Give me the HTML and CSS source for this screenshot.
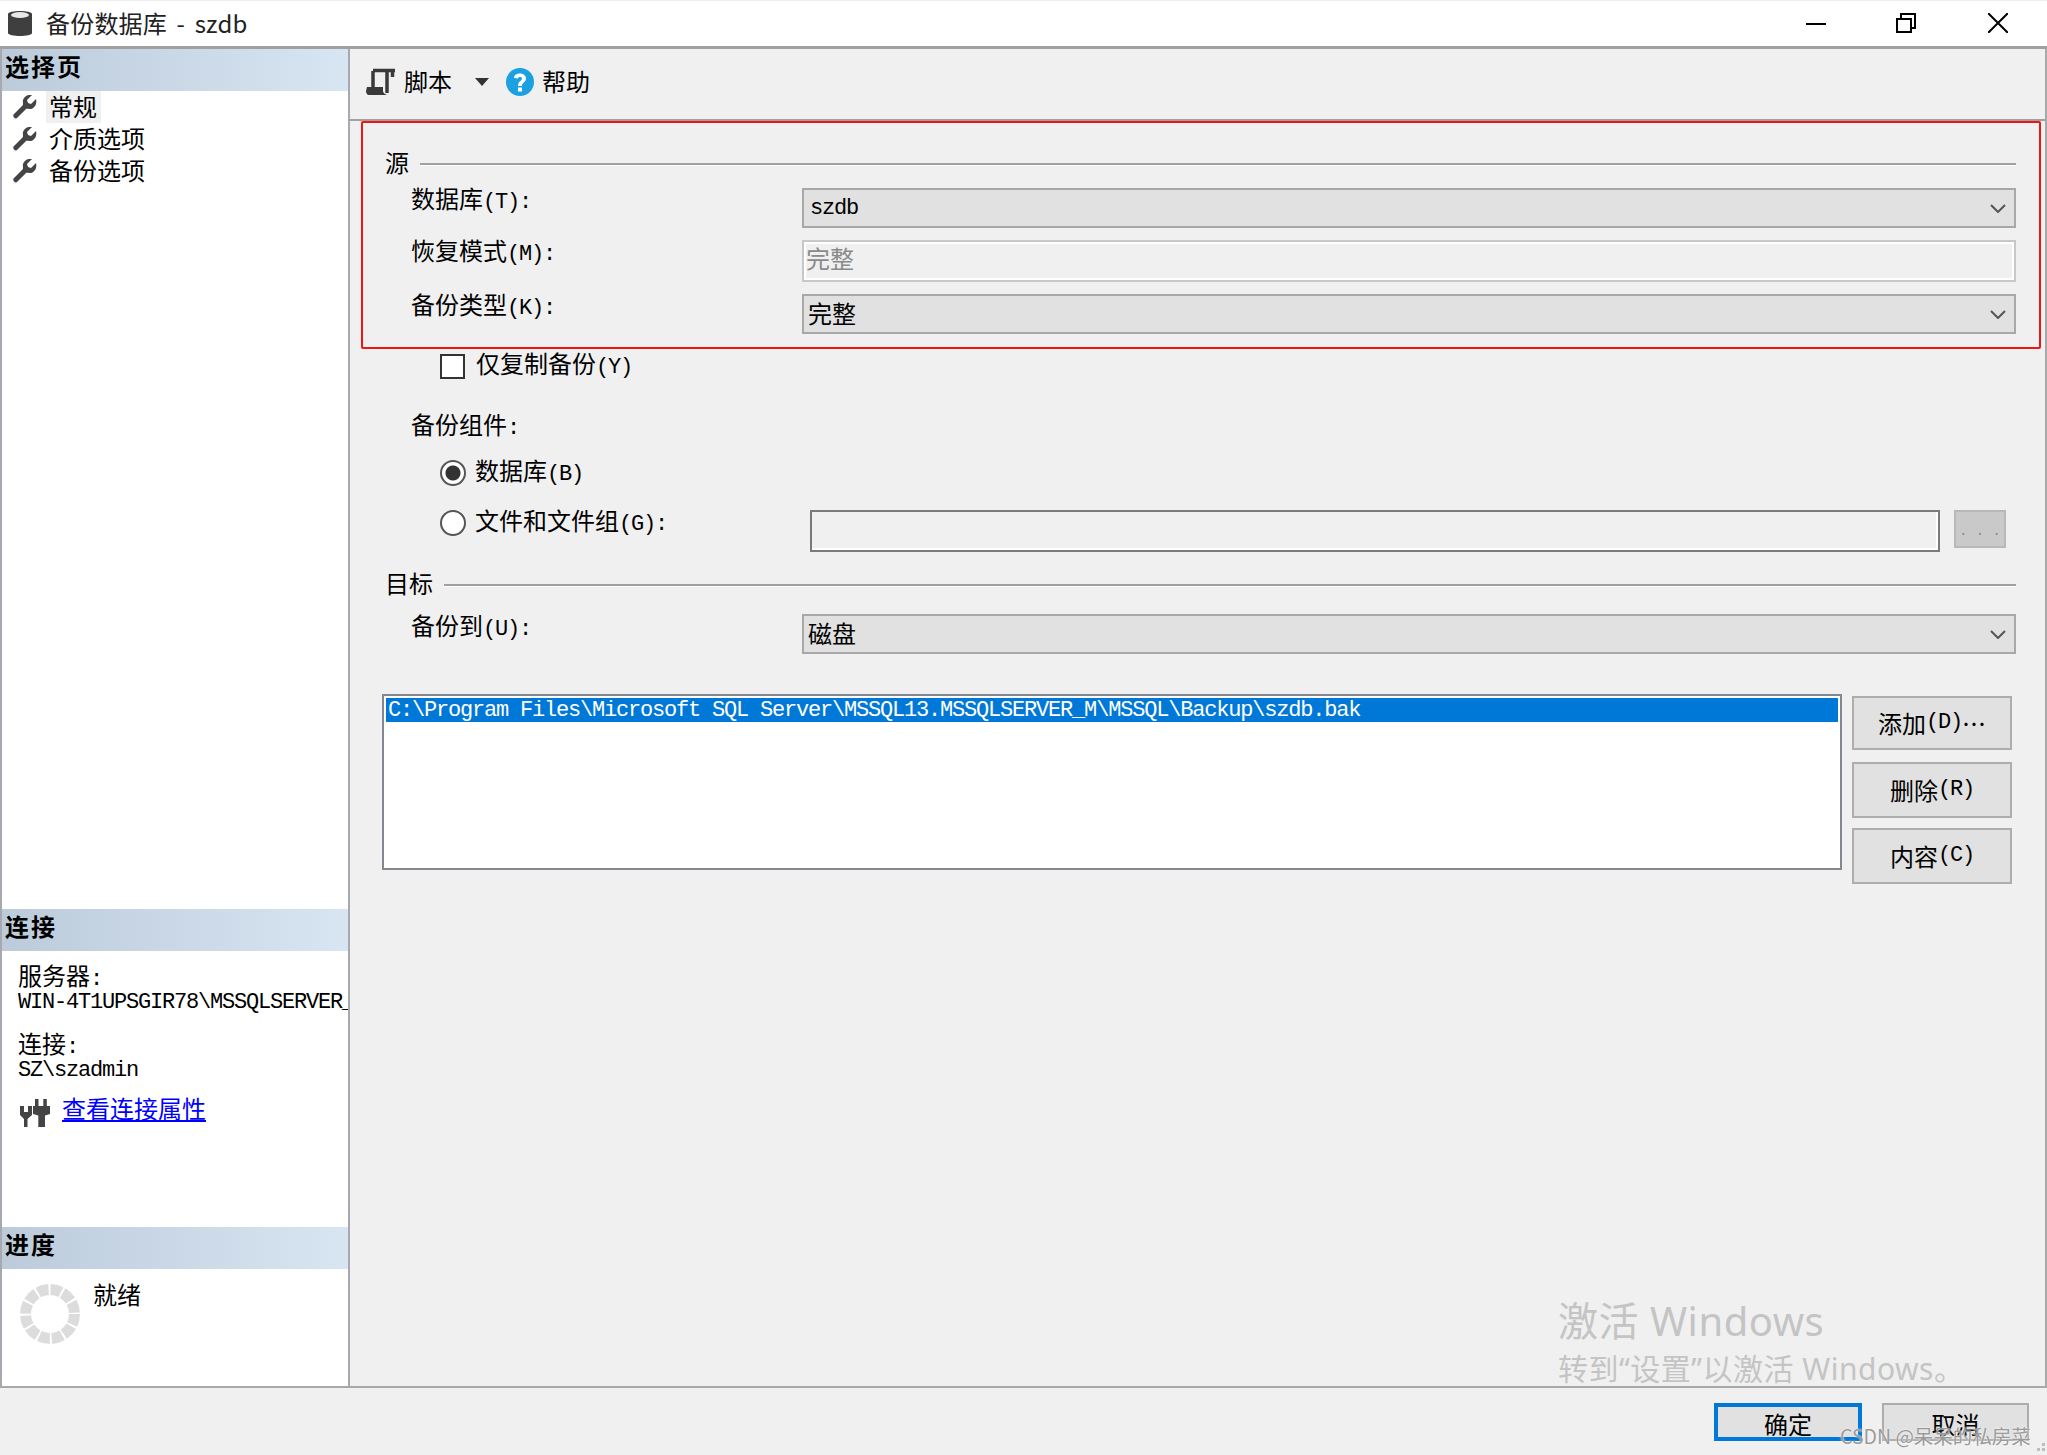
FILE: index.html
```html
<!DOCTYPE html>
<html lang="zh-CN">
<head>
	<meta charset="UTF-8">
	<title>备份数据库 - szdb</title>
	<link rel="stylesheet" href="styles.css">
</head>
<body>

<div class="window">

	<div class="titlebar">
		<svg class="dbIcon" width="24" height="28" viewBox="0 0 24 28">
			<path d="M0 5C0 1 24 1 24 5V24C24 28 0 28 0 24Z" fill="#3f3f3f"/>
			<ellipse cx="12" cy="6" rx="9" ry="3" fill="#e8e8e8"/>
		</svg>
		<span class="titleText">备份数据库 - szdb</span>
		<svg class="winBtn btnMin" width="20" height="20" viewBox="0 0 20 20"><path d="M0 11H20" stroke="#000" stroke-width="2"/></svg>
		<svg class="winBtn btnMax" width="20" height="20" viewBox="0 0 20 20"><path d="M1 6H15V19H1ZM5 6V1H19V15H15" fill="none" stroke="#000" stroke-width="2"/></svg>
		<svg class="winBtn btnClose" width="20" height="20" viewBox="0 0 20 20"><path d="M0 0L20 20M20 0L0 20" stroke="#000" stroke-width="2"/></svg>
	</div>

	<div class="main">

		<div class="side">
			<div class="sideHead">选择页</div>
			<ul class="nav">
				<li class="navItem">
					<svg class="wrench" width="24" height="24" viewBox="0 0 24 24"><use href="#wrench"/></svg>
					<span class="navText navSel">常规</span>
				</li>
				<li class="navItem">
					<svg class="wrench" width="24" height="24" viewBox="0 0 24 24"><use href="#wrench"/></svg>
					<span class="navText">介质选项</span>
				</li>
				<li class="navItem">
					<svg class="wrench" width="24" height="24" viewBox="0 0 24 24"><use href="#wrench"/></svg>
					<span class="navText">备份选项</span>
				</li>
			</ul>

			<div class="sideHead">连接</div>
			<div class="connBody">
				<div>服务器<span class="m">:</span></div>
				<div class="m connLine">WIN-4T1UPSGIR78\MSSQLSERVER_M</div>
				<div class="connGap">连接<span class="m">:</span></div>
				<div class="m connLine">SZ\szadmin</div>
				<div class="connLink">
					<svg width="30" height="29" viewBox="0 0 30 29">
						<path d="M15 0H18.500V7H15ZM23.300 0H26.800V7H23.300ZM13 7H30V15L25 16.500V28H18.300V16.500L13 15Z" fill="#444"/>
						<path d="M0 7H4V13H8V7H12V16L7.500 20V28H4V20L0 16Z" fill="#444"/>
					</svg>
					<a class="link" href="#">查看连接属性</a>
				</div>
			</div>

			<div class="sideHead">进度</div>
			<div class="progBody">
				<svg width="60" height="60" viewBox="0 0 60 60">
					<circle cx="30" cy="30" r="24.5" fill="none" stroke="#dcdcdc" stroke-width="11" stroke-dasharray="10.8 2"/>
				</svg>
				<span>就绪</span>
			</div>
		</div>

		<div class="content">
			<div class="toolbar">
				<svg class="scriptIcon" width="30" height="28" viewBox="0 0 30 28">
					<path d="M7 3V21M21 4V25M7 2.500H29M26.500 2V9" fill="none" stroke="#3a3a3a" stroke-width="3.500"/>
					<path d="M1 19H17V23C17 25 19 26 21 27H3C1 27 0 25 0 23Z" fill="#3a3a3a"/>
				</svg>
				<span class="toolText">脚本</span>
				<svg class="caret" width="14" height="8" viewBox="0 0 14 8"><path d="M0 0H14L7 8Z" fill="#333"/></svg>
				<svg class="helpIcon" width="28" height="28" viewBox="0 0 28 28">
					<circle cx="14" cy="14" r="14" fill="#1ba1e2"/>
					<path d="M8 10C8 4 20 4 20 10.500C20 14 16 14.500 16 18H12C12 13 16 13 16 10.500C16 8.500 12 8.500 12 10.500Z" fill="#fff"/>
					<rect x="12" y="19.500" width="4" height="4" fill="#fff"/>
				</svg>
				<span class="toolText">帮助</span>
			</div>

			<div class="form">
				<div class="groupHead groupFirst"><span class="groupText">源</span><i class="rule"></i></div>

				<div class="row rowFirst">
					<div class="label">数据库<span class="m">(T):</span></div>
					<div class="combo"><span class="m comboM">szdb</span><svg class="chev" width="16" height="9" viewBox="0 0 16 9"><path d="M1 1L8 8L15 1" fill="none" stroke="#555" stroke-width="2"/></svg></div>
				</div>
				<div class="row">
					<div class="label">恢复模式<span class="m">(M):</span></div>
					<div class="field">完整</div>
				</div>
				<div class="row">
					<div class="label">备份类型<span class="m">(K):</span></div>
					<div class="combo"><span>完整</span><svg class="chev" width="16" height="9" viewBox="0 0 16 9"><path d="M1 1L8 8L15 1" fill="none" stroke="#555" stroke-width="2"/></svg></div>
				</div>

				<div class="checkRow"><i class="check"></i><span class="checkText">仅复制备份<span class="m">(Y)</span></span></div>

				<div class="label compLabel">备份组件<span class="m">:</span></div>

				<div class="radioRow radioFirst"><i class="radio radioOn"></i><span class="radioText">数据库<span class="m">(B)</span></span></div>
				<div class="fileRow">
					<div class="radioRow fileRadio"><i class="radio"></i><span class="radioText">文件和文件组<span class="m">(G):</span></span></div>
					<div class="fileInput"></div>
					<div class="browseBtn">. . .</div>
				</div>

				<div class="groupHead groupTarget"><span class="groupText">目标</span><i class="rule"></i></div>

				<div class="row rowTarget">
					<div class="label labelTarget">备份到<span class="m">(U):</span></div>
					<div class="combo"><span>磁盘</span><svg class="chev" width="16" height="9" viewBox="0 0 16 9"><path d="M1 1L8 8L15 1" fill="none" stroke="#555" stroke-width="2"/></svg></div>
				</div>

				<div class="destRow">
					<div class="destList">
						<div class="destItem m">C:\Program Files\Microsoft SQL Server\MSSQL13.MSSQLSERVER_M\MSSQL\Backup\szdb.bak</div>
					</div>
					<div class="destBtns">
						<div class="btn btnAdd">添加<span class="m">(D)</span>⋯</div>
						<div class="btn btnDel">删除<span class="m">(R)</span></div>
						<div class="btn btnProp">内容<span class="m">(C)</span></div>
					</div>
				</div>
			</div>
		</div>
	</div>

	<div class="footer">
		<div class="okBtn">确定</div>
		<div class="cancelBtn">取消</div>
	</div>

	<!-- red annotation box, drawn over the dialog -->
	<div class="redBox"></div>

	<div class="activate">
		<div class="actBig">激活 Windows</div>
		<div class="actSmall">转到“设置”以激活 Windows。</div>
	</div>
	<div class="csdn">CSDN @呆呆的私房菜</div>
	<svg class="grip" width="14" height="14" viewBox="0 0 14 14">
		<path d="M9 2H12V5H9ZM4 7H7V10H4ZM9 7H12V10H9Z" fill="#bdbdbd"/>
	</svg>
</div>

<svg width="0" height="0" class="defs">
	<defs>
		<path id="wrench" fill="#444" d="M23 4L18 9L15 8L14 5L19 0C14 -1 9 3 10 8C10 9 10 10 9.500 10.500L1 19C0 20 0 21 1 22.500C2.500 24 3.500 23.500 4.500 22.500L13 14C14 13.500 15 14 17 14C21 14 24.500 9 23 4Z"/>
	</defs>
</svg>

</body>
</html>
```

FILE: styles.css
```css
html, body {
	margin: 0;
	padding: 0;
	background: #f0f0f0;
}

body {
	font-family: "Noto Sans CJK SC", sans-serif;
	font-size: 24px;
	line-height: 24px;
	color: #000;
	overflow: hidden;
}

/* half width latin text, 12px a character */
.m {
	font-family: "Liberation Mono", monospace;
	font-size: 22px;
	letter-spacing: -1.2px;
	line-height: 1;
}

.defs {
	position: absolute;
}

.window {
	position: relative;
	display: flex;
	flex-direction: column;
	width: 2047px;
	height: 1455px;
	overflow: hidden;
}

/* title bar */
.titlebar {
	display: flex;
	align-items: center;
	flex: none;
	height: 46px;
	box-sizing: border-box;
	border-top: 1px solid #eee;
	border-bottom: 0;
	background: #fff;
	padding-bottom: 1px;
}

.dbIcon {
	margin-left: 8px;
}

.titleText {
	margin-left: 14px;
	color: #222;
	word-spacing: 4px;
	letter-spacing: 0.2px;
}

.winBtn {
	flex: none;
}

.btnMin {
	margin-left: auto;
}

.btnMax {
	margin-left: 70px;
}

.btnClose {
	margin-left: 72px;
	margin-right: 39px;
}

/* body of the dialog */
.main {
	display: flex;
	flex: none;
	height: 1342px;
	border-top: 3px solid #a0a0a0;
	border-bottom: 2px solid #a8a8a8;
	box-sizing: border-box;
}

.side {
	display: flex;
	flex-direction: column;
	flex: none;
	width: 350px;
	box-sizing: border-box;
	border-left: 2px solid #a8a8b0;
	border-right: 2px solid #a8a8b0;
	background: #fff;
	overflow: hidden;
}

.sideHead {
	flex: none;
	height: 42px;
	padding: 2px 0 0 3px;
	box-sizing: border-box;
	line-height: 29px;
	font-weight: bold;
	letter-spacing: 2px;
	background: linear-gradient(to right, #bccbda, #d8e5f3);
}

.nav {
	flex: 1;
	margin: 0;
	padding: 0;
	list-style: none;
}

.navItem {
	display: flex;
	align-items: center;
	height: 32px;
	padding-left: 11px;
}

.wrench {
	flex: none;
}

.navText {
	margin-left: 9px;
	padding: 3px 4px 5px 3px;
}

.navSel {
	background: #f0f0f0;
}

.connBody {
	flex: none;
	height: 276px;
	padding: 12px 0 0 16px;
	box-sizing: border-box;
	white-space: nowrap;
}

.connLine {
	line-height: 24px;
}

.connGap {
	margin-top: 16px;
}

.connLink {
	display: flex;
	align-items: flex-start;
	margin: 16px 0 0 2px;
}

.link {
	margin-left: 12px;
	color: #00f;
	text-decoration: underline;
	margin-top: -3px;
}

.progBody {
	display: flex;
	align-items: flex-start;
	flex: none;
	height: 117px;
	padding: 15px 0 0 18px;
	box-sizing: border-box;
}

.progBody span {
	margin-left: 13px;
	margin-top: -2px;
}

/* right hand part */
.content {
	flex: 1;
	box-sizing: border-box;
	border-right: 2px solid #a8a8a8;
}

.toolbar {
	display: flex;
	align-items: center;
	height: 72px;
	box-sizing: border-box;
	padding: 0 0 4px 16px;
	border-bottom: 2px solid #a0a0a0;
}

.toolText {
	margin-left: 8px;
	margin-top: -2px;
}

.caret {
	margin-left: 23px;
}

.helpIcon {
	margin-left: 17px;
}

.form {
	padding: 0 29px 0 36px;
}

.groupHead {
	display: flex;
	align-items: center;
	height: 26px;
}

.groupText {
	margin: -4px 0 0 -1px;
}

.groupFirst {
	margin-top: 30px;
}

.groupTarget {
	margin-top: 20px;
}

.rule {
	flex: 1;
	margin-left: 11px;
	height: 2px;
	background: #a0a0a0;
	border-bottom: 1px solid #fff;
}

.row {
	display: flex;
	align-items: flex-start;
	margin-top: 12px;
}

.rowFirst {
	margin-top: 11px;
}

.rowTarget {
	margin-top: 16px;
}

.label {
	padding-left: 25px;
	height: 24px;
}

.row .label {
	flex: none;
	width: 391px;
	margin-top: -2px;
}

.row .labelTarget {
	margin-top: -1px;
}

.combo {
	display: flex;
	align-items: center;
	justify-content: space-between;
	flex: 1;
	height: 40px;
	box-sizing: border-box;
	padding: 0 8px 0 4px;
	border: 2px solid #a8a8a8;
	background: #e1e1e1;
}

.combo span {
	margin-top: -2px;
}

.combo .comboM {
	margin: 1px 0 0 2px;
}

.field {
	flex: 1;
	height: 42px;
	box-sizing: border-box;
	padding-left: 2px;
	line-height: 32px;
	color: #8a8a8a;
	border: 2px solid #c8c8c8;
	outline: 2px solid #fff;
	outline-offset: -4px;
	background: #f0f0f0;
}

.checkRow {
	display: flex;
	align-items: center;
	margin-top: 20px;
	padding-left: 54px;
	height: 25px;
}

.checkText {
	margin-left: 11px;
	margin-top: -3px;
}

.check {
	flex: none;
	width: 25px;
	height: 25px;
	box-sizing: border-box;
	border: 2px solid #333;
	background: #fff;
}

.compLabel {
	margin-top: 35px;
	position: relative;
	top: -2px;
}

.radioRow {
	display: flex;
	align-items: center;
	padding-left: 54px;
	height: 26px;
}

.radioText {
	margin-left: 9px;
	margin-top: -3px;
}

.radioFirst {
	margin-top: 22px;
}

.radio {
	flex: none;
	width: 26px;
	height: 26px;
	box-sizing: border-box;
	border: 2px solid #555;
	border-radius: 50%;
	background: #fff;
}

.radioOn {
	background: radial-gradient(circle, #333 7px, #fff 8px);
}

.fileRow {
	display: flex;
	align-items: flex-start;
	margin-top: 24px;
}

.fileRadio {
	flex: none;
	width: 370px;
}

.fileInput {
	flex: none;
	width: 1130px;
	height: 42px;
	box-sizing: border-box;
	border: 2px solid #7a7a7a;
	box-shadow: inset -2px -2px 0 #fff;
}

.browseBtn {
	flex: none;
	width: 52px;
	height: 38px;
	margin-left: 14px;
	box-sizing: border-box;
	border: 2px solid #b8b8b8;
	background: #c9c9c9;
	color: #8c8c8c;
	font-family: "Liberation Mono", monospace;
	font-size: 14px;
	line-height: 38px;
	text-align: center;
}

.destRow {
	display: flex;
	align-items: flex-start;
	margin: 40px 0 0 -4px;
}

.destList {
	flex: none;
	width: 1460px;
	height: 176px;
	box-sizing: border-box;
	padding: 2px;
	border: 2px solid #828790;
	background: #fff;
}

.destItem {
	height: 24px;
	padding-left: 2px;
	line-height: 26px;
	color: #fff;
	background: #0078d7;
}

.destBtns {
	flex: none;
	width: 160px;
	margin: 2px 0 0 10px;
}

.btn {
	display: flex;
	align-items: center;
	justify-content: center;
	box-sizing: border-box;
	border: 2px solid #adadad;
	background: #e1e1e1;
}

.btnAdd {
	height: 54px;
}

.btnDel {
	height: 56px;
	margin-top: 12px;
}

.btnProp {
	height: 56px;
	margin-top: 10px;
}

/* bottom buttons */
.footer {
	display: flex;
	justify-content: flex-end;
	gap: 20px;
	padding: 15px 18px 0 0;
}

.okBtn, .cancelBtn {
	height: 38px;
	box-sizing: border-box;
	text-align: center;
	background: #e1e1e1;
}

.okBtn {
	width: 148px;
	border: 4px solid #0078d7;
	line-height: 33px;
}

.cancelBtn {
	width: 147px;
	border: 2px solid #adadad;
	line-height: 37px;
}

/* things lying over the dialog */
.redBox {
	position: absolute;
	left: 361px;
	top: 121px;
	width: 1680px;
	height: 228px;
	box-sizing: border-box;
	border: 2px solid #f01414;
	border-radius: 2px;
}

.activate {
	position: absolute;
	left: 1558px;
	top: 1295px;
	color: #c4c4c4;
	white-space: nowrap;
	font-family: "Noto Sans", "Noto Sans CJK SC", sans-serif;
	letter-spacing: 0.5px;
}

.actBig {
	font-size: 40px;
	line-height: 52px;
}

.actSmall {
	font-size: 30px;
	line-height: 40px;
	margin-top: 2px;
}

.csdn {
	position: absolute;
	left: 1840px;
	top: 1424px;
	font-size: 19.5px;
	color: #9a9a9a;
	text-shadow: 0 0 2px #fff;
	white-space: nowrap;
}

.grip {
	position: absolute;
	right: 0;
	bottom: 0;
}
```
